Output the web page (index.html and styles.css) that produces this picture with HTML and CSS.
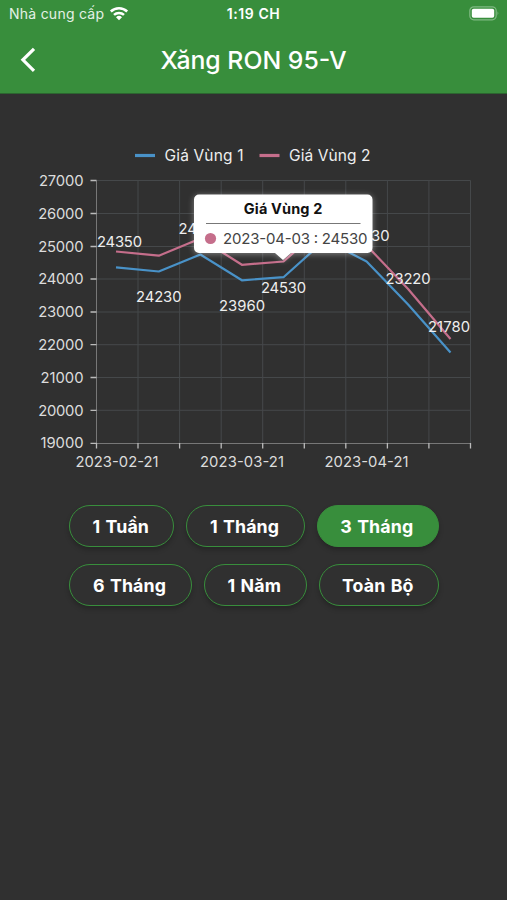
FILE: index.html
```html
<!DOCTYPE html>
<html lang="vi">
<head>
<meta charset="utf-8">
<meta name="viewport" content="width=device-width, initial-scale=1">
<title>Xăng RON 95-V</title>
<link rel="stylesheet" href="styles.css">
</head>
<body>
<header class="header">
  <div class="status">
    <div class="carrier"><span class="carrier-name">Nhà cung cấp</span>
      <svg class="wifi" width="20" height="15" viewBox="0 0 20 15" fill="none" stroke="#fff" stroke-width="2.5">
        <path d="M1.800 5.500a11.700 11.700 0 0 1 16.400 0M5 8.900a7.200 7.200 0 0 1 10 0"/>
        <path d="M10 14.200 7 11.200a4.300 4.300 0 0 1 6 0z" fill="#fff" stroke="none"/>
      </svg>
    </div>
    <span class="clock">1:19 CH</span>
    <svg class="battery" width="31" height="15" viewBox="0 0 31 15">
      <rect x=".8" y=".8" width="26.4" height="13" rx="4" fill="none" stroke="#7fb982" stroke-width="1.2"/>
      <rect x="2.8" y="2.8" width="22.4" height="9" rx="1.8" fill="#fff"/>
      <path d="M28.600 5.200q1.800 2.100 0 4.200z" fill="#8fc291"/>
    </svg>
  </div>
  <nav class="bar">
    <svg class="back" width="16" height="26" viewBox="0 0 16 26" fill="none" stroke="#fff" stroke-width="3.2"><path d="M14 1.800 2.900 12.800 14 23.800"/></svg>
    <h1 class="title">Xăng RON 95-V</h1>
  </nav>
</header>
<main class="main">
  <section class="chart">
    <svg width="507" height="340" viewBox="0 140 507 340">
      <g stroke-width="3.2">
        <path d="M135 155.500h20" stroke="#4992c8"/>
        <path d="M259.500 155.500h20" stroke="#c56e8b"/>
      </g>
      <g class="legend">
        <text x="164.500" y="161" textLength="79">Giá Vùng 1</text>
        <text x="289" y="161" textLength="81.500">Giá Vùng 2</text>
      </g>
      <path class="grid" d="M96.500 180.500H470.500M96.500 213.500H470.500M96.500 246.500H470.500M96.500 279H470.500M96.500 312H470.500M96.500 344.700H470.500M96.500 377.500H470.500M96.500 410.300H470.500M138 180.500V443M179.600 180.500V443M221.200 180.500V443M262.700 180.500V443M304.300 180.500V443M345.800 180.500V443M387.400 180.500V443M428.900 180.500V443M470.500 180.500V443"/>
      <path class="axis" d="M96.500 180.500V443.500H470.500"/>
      <path class="ticks" d="M90.500 180.500h6M90.500 213.500h6M90.500 246.500h6M90.500 279h6M90.500 312h6M90.500 344.700h6M90.500 377.500h6M90.500 410.300h6M90.500 443.300h6M96.500 443v5.500M138 443v5.500M179.600 443v5.500M221.200 443v5.500M262.700 443v5.500M304.300 443v5.500M345.800 443v5.500M387.400 443v5.500M428.900 443v5.500M470.500 443v5.500"/>
      <g class="label" text-anchor="end">
        <text x="83.500" y="186" textLength="44.500">27000</text>
        <text x="83.500" y="218.800" textLength="45.300">26000</text>
        <text x="83.500" y="251.600" textLength="45.300">25000</text>
        <text x="83.500" y="284.400" textLength="45.300">24000</text>
        <text x="83.500" y="317.200" textLength="45.300">23000</text>
        <text x="83.500" y="350" textLength="45.300">22000</text>
        <text x="83.500" y="382.800" textLength="43">21000</text>
        <text x="83.500" y="415.600" textLength="45.300">20000</text>
        <text x="83.500" y="448.400" textLength="43">19000</text>
      </g>
      <g class="label">
        <text x="75.500" y="466.500" textLength="83">2023-02-21</text>
        <text x="200" y="466.500" textLength="84">2023-03-21</text>
        <text x="324.500" y="466.500" textLength="84">2023-04-21</text>
      </g>
      <polyline class="line zone1" points="116,267.300 158.800,271.500 200.400,254.500 241.900,280.300 283.500,277.200 325,240 366.600,261.500 408.100,304.600 450.500,352.500"/>
      <polyline class="line zone2" points="116,251.500 158.800,255.700 200.400,238.500 241.900,264.800 283.500,261.500 325,225 366.600,245.500 408.100,289 450.500,339"/>
      <g class="value">
        <text x="97" y="247.300" textLength="45">24350</text>
        <text x="136" y="302.300" textLength="45.500">24230</text>
        <text x="178.500" y="234">24</text>
        <text x="219" y="311.300" textLength="46">23960</text>
        <text x="261" y="292.500" textLength="45">24530</text>
        <text x="371" y="241.300">30</text>
        <text x="385.500" y="284.300" textLength="45">23220</text>
        <text x="428" y="332" textLength="42">21780</text>
      </g>
      <g class="tooltip">
        <path class="bubble" d="M199 194.500H367.500a5 5 0 0 1 5 5V248a5 5 0 0 1-5 5H291l-8 7-8-7H199a5 5 0 0 1-5-5V199.500a5 5 0 0 1 5-5z"/>
        <text class="tip-title" x="243.800" y="214" textLength="78.500">Giá Vùng 2</text>
        <path d="M206 223.500H360.500" stroke="#777"/>
        <circle cx="210.500" cy="238.500" r="5.600" fill="#c56e8b"/>
        <text class="tip-text" x="223" y="243.700" textLength="144.500">2023-04-03 : 24530</text>
      </g>
    </svg>
  </section>
  <section class="ranges">
    <div class="row row-a">
      <button class="range">1 Tuần</button>
      <button class="range">1 Tháng</button>
      <button class="range active">3 Tháng</button>
    </div>
    <div class="row row-b">
      <button class="range">6 Tháng</button>
      <button class="range">1 Năm</button>
      <button class="range">Toàn Bộ</button>
    </div>
  </section>
</main>
</body>
</html>
```
FILE: styles.css
```css
* { box-sizing: border-box; }
body {
  margin: 0;
  height: 900px;
  overflow: hidden;
  background: #303030;
  color: #fff;
  font-family: Inter, "Liberation Sans", sans-serif;
}
.header { height: 94px; background: #388e3c; border-bottom: 1px solid #2c6530; }
.status {
  height: 28px;
  padding: 0 7px 0 9px;
  display: grid;
  grid-template-columns: 1fr auto 1fr;
  align-items: center;
  font-size: 14px;
}
.carrier { display: flex; align-items: center; gap: 5px; color: #e4f1e5; }
.carrier-name { margin-top: -2px; font-size: 14px; letter-spacing: .25px; white-space: nowrap; }
.wifi { margin-top: -2px; }
.clock { margin: -2px 2px 0 0; font-size: 14px; font-weight: 600; letter-spacing: .6px; }
.battery { justify-self: end; margin-top: -2px; }
.bar {
  height: 64px;
  padding: 0 20px;
  display: grid;
  grid-template-columns: 60px 1fr 60px;
  align-items: center;
}
.title { margin: 0; text-align: center; font-size: 24.800px; line-height: 30px; font-weight: 500; white-space: nowrap; }
.chart { height: 340px; margin-top: 46px; }
.chart svg { display: block; }
.legend { font-size: 15.500px; fill: #eee; }
.label { font-size: 14.800px; fill: #dcdcdc; }
.value { font-size: 14.800px; fill: #eee; }
.grid { stroke: #45484a; fill: none; }
.axis { stroke: #777; fill: none; }
.ticks { stroke: #bbb; stroke-width: 1.3; fill: none; }
.line { fill: none; stroke-width: 2.2; stroke-linejoin: round; }
.zone1 { stroke: #4992c8; }
.zone2 { stroke: #c56e8b; }
.bubble { fill: #fff; filter: drop-shadow(0 1px 3px rgba(255, 255, 255, .4)); }
.tip-title { font-size: 14.500px; font-weight: 700; fill: #111; }
.tip-text { font-size: 15px; fill: #444; }
.ranges { padding: 25px 0 0 1px; display: grid; row-gap: 17px; justify-content: center; }
.row { display: grid; column-gap: 12px; }
.row-a { grid-template-columns: 105px 118.500px 122px; }
.row-b { grid-template-columns: 122.500px 103px 120px; }
.range {
  height: 42px;
  padding: 0 2px 0 0;
  border: 1.500px solid #388e3c;
  border-radius: 21px;
  background: #303030;
  color: #fff;
  font: 700 17.800px Inter, "Liberation Sans", sans-serif;
  letter-spacing: .1px;
  word-spacing: 1px;
  white-space: nowrap;
  box-shadow: 0 3px 5px rgba(0, 0, 0, .22);
}
.active { background: #388e3c; }
```
